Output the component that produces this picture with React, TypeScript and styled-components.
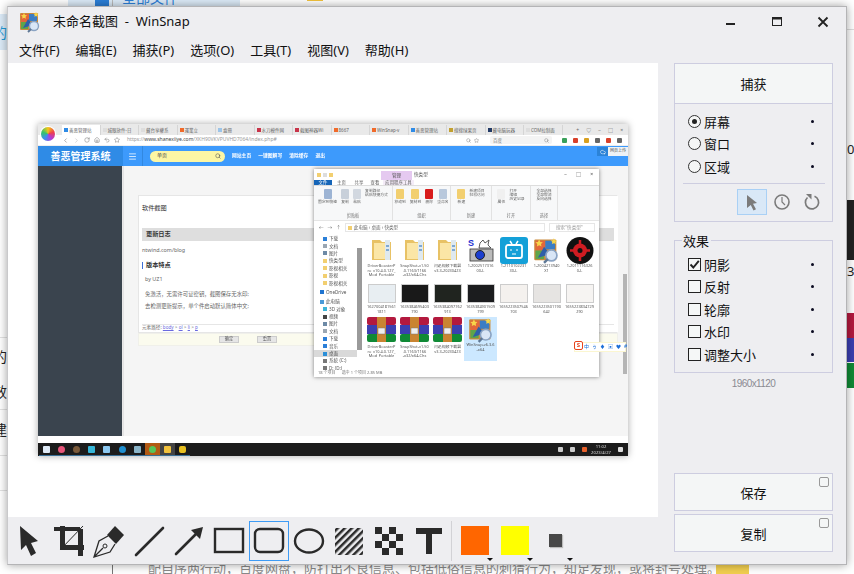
import React from "react";
import styled, { createGlobalStyle } from "styled-components";
import { ChevronLeft, ChevronRight, RotateCw, Home, Undo2, Star, Search, Menu as MenuIcon, Cloud } from "lucide-react";

const Global = createGlobalStyle`
  html, body { margin: 0; padding: 0; background: #fff; overflow: hidden; }
  body { width: 854px; height: 574px; position: relative; font-family: "Noto Sans", "Noto Sans CJK SC", sans-serif; color: #111; }
  * { box-sizing: border-box; }
`;

/* ---------- what shows behind the window ---------- */
const Desktop = styled.div`position: relative; width: 854px; height: 574px; overflow: hidden; background: #fff;`;
const BackBit = styled.div<{ $x: number; $y: number; $w?: number; $h?: number; $bg?: string; $c?: string; $fs?: number }>`
  position: absolute; left: ${p => p.$x}px; top: ${p => p.$y}px;
  ${p => (p.$w ? `width: ${p.$w}px;` : "")} ${p => (p.$h ? `height: ${p.$h}px;` : "")}
  background: ${p => p.$bg || "transparent"}; color: ${p => p.$c || "#222"};
  font-size: ${p => p.$fs || 14}px; line-height: 1; white-space: nowrap; overflow: hidden;
`;

/* ---------- window ---------- */
const Win = styled.div`
  position: absolute; left: 7px; top: 6px; width: 840px; height: 559px;
  background: #eeeef1; border: 1px solid #b4b4b6; border-left-color: #c9c9cb;
  box-shadow: 0 0 9px rgba(0,0,0,.38); display: flex; flex-direction: column;
`;
const TitleBar = styled.div`height: 29px; display: flex; align-items: center; padding-left: 11px; flex: none;`;
const Title = styled.div`margin: -2px 0 0 12px; font-size: 13px; color: #111; white-space: pre;`;
const WinButtons = styled.div`margin-left: auto; display: flex; align-items: center; padding-right: 16px; gap: 32px;`;
const WinBtn = styled.svg`width: 14px; height: 14px; display: block;`;
const MenuBar = styled.div`height: 27px; flex: none; display: flex; align-items: center; padding-left: 11px; gap: 16px; font-size: 13px; color: #111;`;
const MainRow = styled.div`flex: 1; display: flex; min-height: 0;`;
const LeftCol = styled.div`width: 650px; display: flex; flex-direction: column;`;
const Canvas = styled.div`flex: 1; background: #fff; display: flex; align-items: center; justify-content: center; min-height: 0;`;
const Toolbar = styled.div`height: 47px; flex: none; display: flex; align-items: center; padding: 0 0 0 1px;`;
const ToolBtn = styled.div<{ $on?: boolean }>`
  width: 40px; height: 40px; flex: none; border: 1px solid ${p => (p.$on ? "#3d9bf5" : "transparent")};
  display: flex; align-items: center; justify-content: center;
`;
const ToolIcon = styled.svg`width: 40px; height: 40px; flex: none; display: block; margin: -1px;`;
const ToolSep = styled.div`width: 1px; height: 40px; background: #d2d2d6; margin: 0 3px 0 2px; flex: none;`;
const Swatch = styled.div`width: 40px; height: 40px; flex: none; position: relative; display: flex; align-items: center; justify-content: center; padding-right: 0;
  &::after { content: ""; position: absolute; right: 2px; bottom: 0; border: 3px solid transparent; border-top: 3px solid #111; border-bottom: 0; }
`;
const Color = styled.div<{ $c: string; $s: number }>`width: ${p => p.$s}px; height: ${p => p.$s + (p.$s > 20 ? 1 : 0)}px; background: ${p => p.$c}; box-shadow: ${p => (p.$s < 20 ? "1px 1px 1px #bbb" : "none")};`;

/* ---------- side panel ---------- */
const Side = styled.div`flex: 1; padding: 0 13px 12px 16px; display: flex; flex-direction: column;`;
const CaptureBox = styled.div`border: 1px solid #cdcde0; display: flex; flex-direction: column; height: 159px; flex: none;`;
const BigBtn = styled.div`height: 40px; flex: none; background: #f4f6f6; display: flex; align-items: center; justify-content: center; font-size: 13px; position: relative; color: #111;`;
const CaptureHead = styled(BigBtn)`border-bottom: 1px solid #cdcde0;`;
const OptionList = styled.div`padding: 6px 0 0 13px; display: flex; flex-direction: column;`;
const Opt = styled.div`height: 22.5px; display: flex; align-items: center; font-size: 13px; color: #111; padding-right: 18px;`;
const Radio = styled.span<{ $on?: boolean }>`
  width: 13px; height: 13px; border-radius: 50%; border: 1px solid #333; background: #f5f6f6; margin-right: 3px; flex: none;
  display: flex; align-items: center; justify-content: center;
  &::after { content: ""; width: 5px; height: 5px; border-radius: 50%; background: ${p => (p.$on ? "#222" : "transparent")}; }
`;
const Check = styled.span`
  width: 13px; height: 13px; border: 1px solid #222; background: #f5f7f7; margin-right: 3px; flex: none; display: flex; align-items: center; justify-content: center;
`;
const Dot = styled.span`width: 3px; height: 3px; border-radius: 50%; background: #0a0a20; margin-left: auto;`;
const Divider = styled.div`height: 1px; background: #cdcde0; margin: 5px 7px 0 8px;`;
const CaptureModes = styled.div`display: flex; align-items: center; padding: 5px 0 0 62px;`;
const ModeBtn = styled.div<{ $on?: boolean }>`
  width: 30px; height: 26px; display: flex; align-items: center; justify-content: center; flex: none;
  background: ${p => (p.$on ? "#d9e8f7" : "transparent")}; border: 1px solid ${p => (p.$on ? "#a9d0f5" : "transparent")};
`;
const EffectsBox = styled.div`margin-top: 18px; border: 1px solid #cdcde0; height: 133px; flex: none; position: relative; padding: 12px 0 0 13px;`;
const Legend = styled.div`position: absolute; left: 7px; top: -9px; background: #eeeef1; padding: 0 2px 0 1px; font-size: 13px; line-height: 18px;`;
const SizeText = styled.div`text-align: center; font-size: 10px; letter-spacing: -.6px; color: #8a8a92; margin-top: 4px; font-family: "Liberation Sans", sans-serif; line-height: 14px;`;
const BottomBtns = styled.div`margin-top: auto; display: flex; flex-direction: column; gap: 3px;`;
const OutBtn = styled(BigBtn)`border: 1px solid #cdcde0; height: 38px;
  &::after { content: ""; position: absolute; right: 3px; top: 3px; width: 8px; height: 8px; border: 1px solid #999; border-radius: 2px; background: #f4f6f6; }
`;

/* ---------- the captured picture ---------- */
const Shot = styled.div`
  width: 590px; height: 332px; position: relative; background: #f5f5f5; box-shadow: 0 0 7px rgba(0,0,0,.35);
  display: flex; flex-direction: column; overflow: hidden; font-size: 5px; color: #555; filter: blur(.4px); line-height: 1.1;
`;
const TabRow = styled.div`height: 11px; flex: none; background: #e9e9e9; display: flex; padding-left: 24px; align-items: flex-end;`;
const Tab = styled.div<{ $on?: boolean }>`width: 38.5px; height: 10px; flex: none; background: ${p => (p.$on ? "#fff" : "transparent")}; border-right: 1px solid #d5d5d5; font-size: 4.5px; color: #666; display: flex; align-items: center; gap: 1px; padding-left: 2px; white-space: nowrap; overflow: hidden;`;
const TabIco = styled.span<{ $c: string }>`width: 4px; height: 4px; background: ${p => p.$c}; flex: none;`;
const TabRight = styled.div`margin-left: auto; display: flex; gap: 7px; padding: 0 5px 2px 0; font-size: 5px; color: #666;`;
const Logo = styled.div`position: absolute; left: 3px; top: 3px; width: 14px; height: 14px; border-radius: 50%; background: conic-gradient(#f6c616, #ee3f4f, #b23ad8, #3d8ef0, #35c46a, #f6c616); box-shadow: 0 0 0 1px #fff;`;
const AddrRow = styled.div`height: 11px; flex: none; background: #fff; display: flex; align-items: center; padding-left: 24px; gap: 4px; color: #777; border-bottom: 1px solid #eee;`;
const Url = styled.div`margin-left: 3px; width: 270px; font-size: 5px; color: #999; b { color: #444; font-weight: 400; }`;
const AddrRight = styled.div`margin-left: auto; display: flex; align-items: center; gap: 3px; padding-right: 6px;`;
const SearchField = styled.div`width: 62px; height: 8px; background: #f4f4f4; border-radius: 2px; font-size: 4.5px; padding: 0 3px; margin: 0 4px 0 8px; display: flex; align-items: center; justify-content: space-between;`;
const Mini = styled.span<{ $c: string }>`width: 5px; height: 5px; background: ${p => p.$c}; border-radius: 1px; flex: none; margin-left: 3px;`;
const Header = styled.div`height: 20px; flex: none; background: #3d9afc; display: flex; align-items: center; color: #fff;`;
const Brand = styled.div`width: 85px; height: 100%; background: #2f8be6; font-size: 10px; font-weight: 700; display: flex; align-items: center; justify-content: center;`;
const Burger = styled.div`width: 20px; display: flex; justify-content: center; border-right: 1px solid #3288e0; height: 100%; align-items: center; `;
const Pill = styled.div`width: 75px; height: 11px; border-radius: 6px; background: #fdf6a4; margin-left: 7px; color: #444; display: flex; align-items: center; justify-content: space-between; padding: 0 4px 0 7px; font-size: 5px;`;
const HLinks = styled.div`display: flex; gap: 7px; margin-left: 7px; font-size: 4.8px; font-weight: 700;`;
const Body = styled.div`flex: 1; display: flex; min-height: 0;`;
const Rail = styled.div`width: 85px; background: #3a444e; flex: none; border-right: 1px solid #e8e8e8; box-shadow: 1px 0 0 #e4e4e4;`;
const Content = styled.div`flex: 1; padding: 29px 0 0 15px; display: flex; flex-direction: column; min-width: 0;`;
const Card = styled.div`width: 480px; height: 138px; background: #fff; border: 1px solid #e6e6e6; border-right-color: transparent; padding: 7px 3px 0 3px; display: flex; flex-direction: column; flex: none; position: relative;`;
const CardTitle = styled.div`font-size: 6.2px; color: #333; margin-top: 2px;`;
const GrayBar = styled.div`height: 13px; background: #dedede; margin-top: 16px; font-size: 6.2px; color: #333; display: flex; align-items: center; padding-left: 4px; font-weight: 700;`;
const CardLine = styled.div<{ $t: number; $i?: number }>`margin-top: ${p => p.$t}px; padding-left: ${p => p.$i || 0}px; font-size: 5.4px; color: #666; white-space: nowrap;`;
const Feature = styled.div`margin-top: 8px; font-size: 6.2px; font-weight: 700; color: #333; border-left: 1.5px solid #3d6fd8; padding-left: 3px;`;
const PathLine = styled.div`margin-top: auto; border-top: 1px solid #e6e6e6; font-size: 4.6px; height: 8px; color: #666; u { color: #6a6ae0; }`;
const FormStrip = styled.div`width: 480px; height: 13px; background: #fbfbee; border: 1px solid #f0f0ea; display: flex; align-items: center; padding-left: 80px; gap: 18px; flex: none;`;
const FakeBtn = styled.div`width: 20px; height: 7px; background: #e6e6e6; border: 1px solid #ccc; font-size: 4.2px; display: flex; align-items: center; justify-content: center; color: #555;`;
const Strip = styled.div`height: 7px; background: #fff; flex: none;`;
const Taskbar = styled.div`height: 13px; flex: none; background: #1c1c1c; display: flex; align-items: center; padding-left: 1px; color: #ddd;`;
const TaskCell = styled.div<{ $hl?: string }>`width: 15.1px; height: 13px; flex: none; display: flex; align-items: center; justify-content: center; background: ${p => p.$hl || "transparent"}; border-bottom: 1px solid #3a6f96;`;
const TaskIco = styled.span<{ $c: string; $r?: number }>`width: 7px; height: 7px; background: ${p => p.$c}; border-radius: ${p => p.$r || 1}px;`;
const Tray = styled.div`margin-left: auto; display: flex; align-items: center; gap: 4px; padding-right: 5px; font-size: 4.2px; text-align: center; line-height: 5.4px;`;
const UploadTag = styled.div`position: absolute; right: 0; top: 23px; height: 9px; display: flex; background: #2b83d8; color: #fff; align-items: center; padding-left: 3px; font-size: 4px; gap: 2px; span { background: #eef2f6; color: #555; height: 100%; padding: 2px 2px 0; }`;
const ShotScroll = styled.div`position: absolute; right: 1px; top: 150px; width: 4px; height: 100px; background: #b5b5b5;`;
const Ime = styled.div`position: absolute; left: 537px; top: 219px; width: 50px; height: 8px; background: #fff; display: flex; align-items: center; padding-left: 9px; gap: 3px; color: #1c6fd8; font-size: 5px; box-shadow: 0 0 0 1px #fbf6d0;`;
const ImeLogo = styled.div`position: absolute; left: -1px; top: -2px; width: 9px; height: 9px; border: 1px solid #e8431c; border-radius: 2px; background: #fff; color: #e8431c; font-size: 6px; line-height: 7px; text-align: center; font-weight: 700;`;

/* explorer in picture */
const Explorer = styled.div`position: absolute; left: 276px; top: 45px; width: 285px; height: 208px; background: #fff; box-shadow: 0 0 4px rgba(0,0,0,.5); display: flex; flex-direction: column; font-size: 4.6px; color: #555;`;
const ExTitle = styled.div`height: 11px; flex: none; display: flex; align-items: center; padding-left: 3px; gap: 2px;`;
const ExManage = styled.div`margin-left: 46px; width: 31px; height: 9px; background: #e5c9f0; display: flex; align-items: center; justify-content: center; align-self: flex-end;`;
const ExCtl = styled.div`margin-left: auto; display: flex; gap: 9px; padding-right: 6px; font-size: 5px; color: #444;`;
const ExTabs = styled.div`height: 6px; flex: none; display: flex; align-items: stretch; font-size: 4.4px; border-bottom: 1px solid #ddd;`;
const ExTab = styled.div<{ $w: number; $on?: boolean; $bg?: string }>`width: ${p => p.$w}px; background: ${p => p.$bg || "transparent"}; color: ${p => (p.$on ? "#fff" : "#555")}; display: flex; align-items: center; justify-content: center; overflow: hidden; white-space: nowrap;`;
const Ribbon = styled.div`height: 35px; flex: none; background: #f7f8f9; display: flex; border-bottom: 1px solid #e5e5e5;`;
const RGroup = styled.div<{ $w: number }>`width: ${p => p.$w}px; flex: none; border-right: 1px solid #e2e2e2; display: flex; flex-direction: column; align-items: center; padding-top: 3px;`;
const RIcons = styled.div`flex: 1; display: flex; gap: 4px; align-items: flex-start;`;
const RLabel = styled.div`font-size: 4.2px; color: #777; height: 6px;`;
const RCol = styled.div`display: flex; flex-direction: column; align-items: center; gap: 1px; font-size: 3.8px; color: #666; white-space: nowrap;`;
const RIco = styled.span<{ $c: string; $w?: number }>`width: ${p => p.$w || 8}px; height: ${p => (p.$w ? p.$w + 2 : 10)}px; background: ${p => p.$c}; border-radius: 1px; flex: none;`;
const ExAddr = styled.div`height: 13px; flex: none; display: flex; align-items: center; padding: 0 4px 0 5px; gap: 4px; color: #666;`;
const Crumb = styled.div`flex: 1; height: 9px; border: 1px solid #e6e6e6; display: flex; align-items: center; padding-left: 2px; gap: 2px;`;
const ExSearch = styled.div`width: 46px; height: 9px; border: 1px solid #e6e6e6; display: flex; align-items: center; padding-left: 6px; color: #999;`;
const ExBody = styled.div`flex: 1; display: flex; min-height: 0;`;
const Nav = styled.div`width: 48px; flex: none; display: flex; flex-direction: column; padding-top: 1px; position: relative; overflow: hidden;`;
const NavScroll = styled.div`position: absolute; right: 0; top: 14px; width: 5px; height: 102px; background: #9a9a9a;`;
const NavItem = styled.div<{ $i?: number; $sel?: boolean; $gap?: number }>`height: 7.4px; flex: none; display: flex; align-items: center; gap: 2px; padding-left: ${p => p.$i ?? 9}px; margin-top: ${p => p.$gap || 0}px; background: ${p => (p.$sel ? "#d9d9d9" : "transparent")}; white-space: nowrap; margin-right: 5px;`;
const NavIco = styled.span<{ $c: string }>`width: 4px; height: 4px; background: ${p => p.$c}; flex: none;`;
const Files = styled.div`flex: 1; display: grid; grid-template-columns: repeat(7, 33px); grid-template-rows: 46px 34px 44px; padding: 3px 0 0 3px; align-content: start;`;
const FileCell = styled.div<{ $sel?: boolean }>`display: flex; flex-direction: column; align-items: center; background: ${p => (p.$sel ? "#cce8ff" : "transparent")}; text-align: center; font-size: 3.9px; line-height: 4.6px; color: #555; white-space: pre; overflow: hidden;`;
const Thumb = styled.div<{ $bg: string }>`width: 28px; height: 19px; background: ${p => p.$bg}; flex: none; margin-bottom: 2px; margin-top: 1px; border: 1px solid #ccc;`;
const Status = styled.div`height: 7px; flex: none; font-size: 4px; color: #777; padding-left: 4px; display: flex; align-items: center; gap: 6px;`;

/* ---------- drawings ---------- */
const AppIcon = ({ s = 22 }: { s?: number }) => (
  <svg width={s} height={s} viewBox="0 0 22 22" style={{ flex: "none" }}>
    <rect x="1" y="2" width="18" height="17" rx="1" fill="#c98a3c" />
    <rect x="2" y="3" width="8" height="8" fill="#e2673a" />
    <rect x="10" y="3" width="8" height="7" fill="#3b7dc4" />
    <rect x="2" y="11" width="7" height="7" fill="#5ea54a" />
    <path d="M4 17 L9 8 L14 14 Z" fill="#2f5fa8" />
    <path d="M5 2l1 2 2 .3-1.5 1.4.4 2L5 6.8 3.2 7.700l.3-2L2 4.300l2-.3z" fill="#f7d64a" />
    <path d="M17 1l.8 1.600 1.700.2-1.200 1.200.3 1.700L17 5l-1.600.700.3-1.700-1.200-1.200 1.700-.2z" fill="#f7d64a" />
    <circle cx="15" cy="15" r="4.500" fill="#d9e6f6" stroke="#8ba4c4" strokeWidth="1.400" />
    <path d="M12 18l-3 3" stroke="#5f7896" strokeWidth="2" />
  </svg>
);
const FolderIcon = () => (
  <svg width="22" height="26" viewBox="0 0 22 26" style={{ marginBottom: 1 }}>
    <path d="M1 3h8l2 2h9v18H1z" fill="#e8c265" />
    <path d="M3 6h16v16H3z" fill="#fbe6a6" />
    <path d="M14 3h5v20h-5z" fill="#dfe9ef" />
    <path d="M15 8h3v2h-3zM15 12h3v2h-3z" fill="#7fa9d2" />
  </svg>
);
const RarIcon = () => (
  <svg width="29" height="26" viewBox="0 0 29 26" style={{ marginBottom: 2 }}>
    <rect x="0" y="0" width="29" height="8" rx="2" fill="#b3193e" />
    <rect x="0" y="8" width="29" height="9" fill="#3b3fb0" />
    <rect x="0" y="17" width="29" height="8" rx="2" fill="#108a36" />
    <rect x="10" y="0" width="9" height="25" fill="#c98432" />
    <rect x="11" y="11" width="7" height="6" fill="#eee" stroke="#777" strokeWidth=".5" />
  </svg>
);
const SnapCam = () => (
  <svg width="28" height="26" viewBox="0 0 28 26" style={{ marginBottom: 1 }}>
    <rect width="28" height="26" fill="#fff" />
    <text x="1" y="9" fontSize="9" fontWeight="700" fill="#1c2fd0" fontFamily="Liberation Sans">S</text>
    <path d="M13 6l3-3 2 3 4-3-1 5 3 3H12z" fill="#fff" stroke="#333" strokeWidth=".8" />
    <rect x="3" y="12" width="23" height="12" fill="#bbb" stroke="#333" strokeWidth=".8" />
    <circle cx="13" cy="18" r="4.500" fill="#1c3fd0" stroke="#222" />
  </svg>
);
const Bili = () => (
  <svg width="28" height="27" viewBox="0 0 28 27">
    <rect width="28" height="27" rx="3" fill="#14a0d8" />
    <rect x="6" y="8" width="16" height="13" rx="2" fill="none" stroke="#fff" strokeWidth="1.800" />
    <path d="M10 4l2 3M18 4l-2 3" stroke="#fff" strokeWidth="1.500" />
    <path d="M10 13h2M16 13h2M12 17h4" stroke="#fff" strokeWidth="1.200" />
  </svg>
);
const RedGear = () => (
  <svg width="28" height="27" viewBox="0 0 28 27">
    <circle cx="14" cy="13.500" r="13.500" fill="#111" />
    <circle cx="14" cy="13.500" r="7" fill="#d01c22" />
    <circle cx="14" cy="13.500" r="2.500" fill="#111" />
    <path d="M14 3v5M14 19v5M4 13.500h5M19 13.500h5" stroke="#d01c22" strokeWidth="2.500" />
  </svg>
);

const tabs: [string, string][] = [
  ["善恶管理站", "#2f8be6"], ["城眼放件-日", "#ddd"], ["藏台享權系", "#ddd"], ["運業立", "#f06a2a"], ["盒冊", "#9cc4e8"],
  ["水刀模件网", "#c8344a"], ["截图神器Wi", "#c8344a"], ["8667", "#f06a2a"], ["WinSnap-v", "#f06a2a"], ["善恶管理站", "#2f8be6"],
  ["搜搜绿果页", "#c2a030"], ["藏电脑玩器", "#223a66"], ["COM拉制面", "#ddd"],
];
const navItems: { t: string; c: string; i?: number; sel?: boolean; gap?: number }[] = [
  { t: "下载", c: "#2b7fd8" }, { t: "文档", c: "#9aa6b2" }, { t: "图片", c: "#6d8aa6" }, { t: "快类型", c: "#f2cf70" }, { t: "影视相关", c: "#f2cf70" },
  { t: "影视", c: "#f2cf70" }, { t: "影视相关", c: "#f2cf70" },
  { t: "OneDrive", c: "#1f74d0", i: 6, gap: 2 }, { t: "此电脑", c: "#4a9ad8", i: 6, gap: 2 },
  { t: "3D 对象", c: "#3cb4d8" }, { t: "视频", c: "#444" }, { t: "图片", c: "#6d8aa6" }, { t: "文档", c: "#9aa6b2" }, { t: "下载", c: "#2b7fd8" }, { t: "音乐", c: "#2b7fd8" },
  { t: "桌面", c: "#2b8fd8", sel: true }, { t: "系统 (C:)", c: "#777" }, { t: "D: (D:)", c: "#777" },
];
const row1: [React.ReactNode, string][] = [
  [<FolderIcon />, "DriverBoosterP\nro_v10.4.0.127_\nMod_Portable"],
  [<FolderIcon />, "SnapShot-v1.50\n.0.1163/1166\n-x32/x64-Chs"],
  [<FolderIcon />, "闪迅视频下载器\nv3.3-20230423"],
  [<SnapCam />, "1-2002517316\n00-L"],
  [<Bili />, "1-2110102231\n30-L"],
  [<AppIcon s={27} />, "1-2004213940\nX1"],
  [<RedGear />, "1-2011116326\n0-L"],
];
const row2: [string, string][] = [
  ["#e8eef2", "1627004181561\n1811"], ["#191919", "1635384695403\n790"], ["#20241f", "1635384097762\n913"], ["#1b1c1e", "1635384901509\n799"],
  ["#f4f1ee", "1655223507546\n703"], ["#e6e4e2", "1655223501190\n642"], ["#f6f4f2", "1655223834729\n290"],
];
const row3 = ["DriverBoosterP\nro_v10.4.0.127_\nMod_Portable", "SnapShot-v1.50\n.0.1163/1166\n-x32/x64-Chs", "闪迅视频下载器\nv3.3-20230423"];
const taskColors: [string, number, string?][] = [
  ["#dfeaf6", 1], ["#e8557a", 4], ["#7a5a3a", 4], ["#35b6d8", 1], ["#8cc8f0", 1], ["#1f8fd0", 4], ["#8ab4c8", 1], ["#56c45a", 4, "#b25a14"], ["#f2c23c", 1, "#444"], ["#e8c020", 2],
];
const menus = ["文件(F)", "编辑(E)", "捕获(P)", "选项(O)", "工具(T)", "视图(V)", "帮助(H)"];
const ic = "#2a2a2a";

const MiniShot = () => (
  <Shot>
    <Logo />
    <TabRow>
      {tabs.map((t, i) => (
        <Tab key={i} $on={i === 0}><TabIco $c={t[1]} />{t[0]}</Tab>
      ))}
      <TabRight><span>+</span><span>♡</span><span>−</span><span>□</span><span>×</span></TabRight>
    </TabRow>
    <AddrRow>
      <ChevronLeft size={7} /><ChevronRight size={7} color="#bbb" /><RotateCw size={6} /><Home size={6} /><Undo2 size={6} /><Star size={6} />
      <Url>https://<b>www.shanexiiye.com</b>/XKH90VKVPUVHD7064/index.php#</Url>
      <AddrRight>
        <Search size={5} /><Star size={5} />
        <SearchField>百度<Search size={5} /></SearchField>
        <Mini $c="#3aa05a" /><Mini $c="#d8402a" /><Mini $c="#d8a020" /><Mini $c="#666" /><Mini $c="#d8402a" /><Mini $c="#666" />
      </AddrRight>
    </AddrRow>
    <Header>
      <Brand>善恶管理系统</Brand>
      <Burger><MenuIcon size={9} /></Burger>
      <Pill>单页<Search size={6} /></Pill>
      <HLinks><span>网站主页</span><span>一键图解写</span><span>清除缓存</span><span>退出</span></HLinks>
    </Header>
    <Body>
      <Rail />
      <Content>
        <Card>
          <CardTitle>软件截图</CardTitle>
          <GrayBar>更新日志</GrayBar>
          <CardLine $t={7}>ntwind.com/blog</CardLine>
          <Feature>版本特点</Feature>
          <CardLine $t={8} $i={3}>by UZ1</CardLine>
          <CardLine $t={9} $i={3}>免激活，无需许可证密钥，截图保存无水印;</CardLine>
          <CardLine $t={7} $i={3}>去检测更新提示，单个件启动默认简体中文;</CardLine>
          <PathLine>元素路径: <u>body</u> &gt; <u>ol</u> &gt; <u>li</u> &gt; <u>p</u></PathLine>
        </Card>
        <FormStrip><FakeBtn>确定</FakeBtn><FakeBtn>重置</FakeBtn></FormStrip>
      </Content>
    </Body>
    <Strip />
    <Taskbar>
      {taskColors.map((t, i) => (
        <TaskCell key={i} $hl={t[2]}><TaskIco $c={t[0]} $r={t[1]} /></TaskCell>
      ))}
      <Tray>
        <Mini $c="#ccc" /><Mini $c="#ccc" /><Mini $c="#e8602a" />
        <span>11:02<br />2023/4/27</span>
        <Mini $c="#ddd" />
      </Tray>
    </Taskbar>
    <UploadTag><Cloud size={6} /><span>网页上传</span></UploadTag>
    <ShotScroll />
    <Explorer>
      <ExTitle>
        <TabIco $c="#f2cf70" /><TabIco $c="#ddd" /><TabIco $c="#f2cf70" />
        <ExManage>管理</ExManage><span>快类型</span>
        <ExCtl><span>−</span><span>□</span><span>×</span></ExCtl>
      </ExTitle>
      <ExTabs>
        <ExTab $w={18} $on $bg="#1565b8">文件</ExTab><ExTab $w={19}>主页</ExTab><ExTab $w={16}>共享</ExTab><ExTab $w={16}>查看</ExTab>
        <ExTab $w={31} $bg="#f4ecf8">应用程序工具</ExTab>
      </ExTabs>
      <Ribbon>
        <RGroup $w={79}>
          <RIcons>
            <RCol><RIco $c="#9db4d4" />固定到快速</RCol><RCol><RIco $c="#c8d0da" />复制</RCol><RCol><RIco $c="#d2d8e0" />粘贴</RCol>
            <RCol>复制路径<br />粘贴快捷方式</RCol>
          </RIcons><RLabel>剪贴板</RLabel>
        </RGroup>
        <RGroup $w={58}>
          <RIcons>
            <RCol><RIco $c="#f2cf70" />移动到</RCol><RCol><RIco $c="#f2cf70" />复制到</RCol><RCol><RIco $c="#d81c1c" />删除</RCol><RCol><RIco $c="#b8c8dc" />重命名</RCol>
          </RIcons><RLabel>组织</RLabel>
        </RGroup>
        <RGroup $w={41}>
          <RIcons><RCol><RIco $c="#f2cf70" />新建</RCol><RCol>新建项目<br />轻松访问</RCol></RIcons><RLabel>新建</RLabel>
        </RGroup>
        <RGroup $w={39}>
          <RIcons><RCol><RIco $c="#f0f0f0" />属性</RCol><RCol>打开<br />编辑<br />历史记录</RCol></RIcons><RLabel>打开</RLabel>
        </RGroup>
        <RGroup $w={27}>
          <RIcons><RCol>全部选择<br />全部取消<br />反向选择</RCol></RIcons><RLabel>选择</RLabel>
        </RGroup>
      </Ribbon>
      <ExAddr>
        <span>←</span><span>→</span><span>↑</span>
        <Crumb><TabIco $c="#f2cf70" />此电脑 › 桌面 › 快类型</Crumb>
        <ExSearch>搜索"快类型"</ExSearch>
      </ExAddr>
      <ExBody>
        <Nav>
          <NavScroll />
          {navItems.map((n, i) => (
            <NavItem key={i} $i={n.i} $sel={n.sel} $gap={n.gap}><NavIco $c={n.c} />{n.t}</NavItem>
          ))}
        </Nav>
        <Files>
          {row1.map((f, i) => <FileCell key={i}>{f[0]}{f[1]}</FileCell>)}
          {row2.map((f, i) => <FileCell key={i}><Thumb $bg={f[0]} />{f[1]}</FileCell>)}
          {row3.map((t, i) => <FileCell key={i}><RarIcon />{t}</FileCell>)}
          <FileCell $sel><AppIcon s={26} />{"WinSnap-v6.3.6\n-x64"}</FileCell>
        </Files>
      </ExBody>
      <Status><span>18 个项目</span><span>选中 1 个项目 2.85 MB</span></Status>
    </Explorer>
    <Ime>
      <ImeLogo>S</ImeLogo><span>中</span><span>ぅ</span><span>♦</span><span>▣</span><span>♥</span><span>#</span>
    </Ime>
  </Shot>
);

const Opts = ["屏幕", "窗口", "区域"];
const Effects = ["阴影", "反射", "轮廓", "水印", "调整大小"];

export default function App() {
  return (
    <Desktop>
      <Global />
      <BackBit $x={68} $y={0} $w={172} $h={6} $bg="#dcebf8" />
      <BackBit $x={95} $y={-1} $w={14} $h={7} $bg="#2b7fd8" />
      <BackBit $x={122} $y={-9} $fs={14} $c="#2b7fd8">全部文件</BackBit>
      <BackBit $x={307} $y={0} $w={16} $h={1} $bg="#f2c23c" />
      <BackBit $x={0} $y={14} $w={8} $h={36} $bg="#dcebf8" />
      <BackBit $x={-7} $y={26} $fs={14} $c="#1f9ad8">的</BackBit>
      <BackBit $x={0} $y={337} $w={8} $h={1} $bg="#e2e2e2" />
      <BackBit $x={0} $y={409} $w={8} $h={1} $bg="#e2e2e2" />
      <BackBit $x={0} $y={455} $w={8} $h={1} $bg="#e2e2e2" />
      <BackBit $x={0} $y={490} $w={8} $h={1} $bg="#e2e2e2" />
      <BackBit $x={-7} $y={350} $fs={14}>的</BackBit>
      <BackBit $x={-7} $y={385} $fs={14}>效</BackBit>
      <BackBit $x={-7} $y={423} $fs={14}>建</BackBit>
      <BackBit $x={847} $y={143} $fs={13} $c="#222">0</BackBit>
      <BackBit $x={847} $y={265} $fs={13} $c="#222">3</BackBit>
      <BackBit $x={847} $y={200} $w={7} $h={60} $bg="#222" />
      <BackBit $x={847} $y={313} $w={7} $h={25} $bg="#b3193e" />
      <BackBit $x={847} $y={338} $w={7} $h={24} $bg="#3b3fb0" />
      <BackBit $x={847} $y={363} $w={7} $h={25} $bg="#108a36" />
      <BackBit $x={847} $y={29} $w={7} $h={1} $bg="#ddd" />
      <BackBit $x={112} $y={0} $w={1} $h={6} $bg="#bbb" />
      <BackBit $x={112} $y={565} $w={1} $h={9} $bg="#777" />
      <BackBit $x={148} $y={562} $fs={13} $c="#8a8a8a">配自序两行动，百度网盘，防打出不良信息、包括低俗信息的刺猜行为，知足发现，或将封号处理。</BackBit>
      <BackBit $x={716} $y={565} $w={33} $h={9} $bg="#f2cf50" />
      <Win>
        <TitleBar>
          <AppIcon />
          <Title>未命名截图  -  WinSnap</Title>
          <WinButtons>
            <WinBtn viewBox="0 0 14 14"><rect x="2" y="8" width="9" height="2" fill="#222" /></WinBtn>
            <WinBtn viewBox="0 0 14 14"><rect x="2.500" y="2.500" width="9" height="8" fill="none" stroke="#222" /><rect x="2" y="2" width="10" height="2.500" fill="#222" /></WinBtn>
            <WinBtn viewBox="0 0 14 14"><path d="M2.500 2.500l9 9M11.500 2.500l-9 9" stroke="#222" strokeWidth="1.800" /></WinBtn>
          </WinButtons>
        </TitleBar>
        <MenuBar>{menus.map(m => <span key={m}>{m}</span>)}</MenuBar>
        <MainRow>
          <LeftCol>
            <Canvas><MiniShot /></Canvas>
            <Toolbar>
              <ToolBtn><ToolIcon viewBox="0 0 40 40"><path d="M11 5L29 20 22 22 27 32 22 35 17 24 12 29Z" fill={ic} /></ToolIcon></ToolBtn>
              <ToolBtn><ToolIcon viewBox="0 0 40 40"><path d="M5 6h26v4H5zM11 5h5v24h-5zM11 24h24v5H11zM29 8h5v27h-5z" fill={ic} /><path d="M34 5L11 29" stroke={ic} strokeWidth="1" /></ToolIcon></ToolBtn>
              <ToolBtn><ToolIcon viewBox="0 0 40 40"><path d="M26 5l9 9-8 9-9-9z" fill={ic} /><path d="M19 15l-9 5-5 16 16-5 5-8M5 36l9-9" fill="none" stroke={ic} strokeWidth="1.300" /><circle cx="16" cy="25" r="2" fill="none" stroke={ic} /></ToolIcon></ToolBtn>
              <ToolBtn><ToolIcon viewBox="0 0 40 40"><path d="M7 34L34 7" stroke={ic} strokeWidth="2.600" strokeLinecap="round" /></ToolIcon></ToolBtn>
              <ToolBtn><ToolIcon viewBox="0 0 40 40"><path d="M7 33L28 12" stroke={ic} strokeWidth="2.600" strokeLinecap="round" /><path d="M34 6l-12 3 9 9z" fill={ic} /></ToolIcon></ToolBtn>
              <ToolBtn><ToolIcon viewBox="0 0 40 40"><rect x="6" y="8" width="28" height="23" fill="none" stroke={ic} strokeWidth="2.400" /></ToolIcon></ToolBtn>
              <ToolBtn $on><ToolIcon viewBox="0 0 40 40"><rect x="6" y="8" width="28" height="23" rx="5" fill="none" stroke={ic} strokeWidth="2.400" /></ToolIcon></ToolBtn>
              <ToolBtn><ToolIcon viewBox="0 0 40 40"><ellipse cx="20" cy="20" rx="14" ry="11.500" fill="none" stroke={ic} strokeWidth="2.400" /></ToolIcon></ToolBtn>
              <ToolBtn>
                <ToolIcon viewBox="0 0 40 40">
                  <defs>
                    <pattern id="hatch" width="5" height="5" patternUnits="userSpaceOnUse" patternTransform="rotate(45)">
                      <rect width="2.500" height="5" fill={ic} />
                    </pattern>
                  </defs>
                  <rect x="6" y="7" width="28" height="27" fill="url(#hatch)" />
                </ToolIcon>
              </ToolBtn>
              <ToolBtn><ToolIcon viewBox="0 0 40 40"><path d="M6 6h7v7H6zM20 6h7v7h-7zM13 13h7v7h-7zM27 13h7v7h-7zM6 20h7v7H6zM20 20h7v7h-7zM13 27h7v7h-7zM27 27h7v7h-7z" fill={ic} /></ToolIcon></ToolBtn>
              <ToolBtn><ToolIcon viewBox="0 0 40 40"><path d="M7 7h26v6H23v20h-6V13H7z" fill={ic} /></ToolIcon></ToolBtn>
              <ToolSep />
              <Swatch><Color $c="#ff6600" $s={28} /></Swatch>
              <Swatch><Color $c="#ffff00" $s={28} /></Swatch>
              <Swatch><Color $c="#484848" $s={13} /></Swatch>
            </Toolbar>
          </LeftCol>
          <Side>
            <CaptureBox>
              <CaptureHead>捕获</CaptureHead>
              <OptionList>
                {Opts.map((o, i) => <Opt key={o}><Radio $on={i === 0} />{o}<Dot /></Opt>)}
              </OptionList>
              <Divider />
              <CaptureModes>
                <ModeBtn $on>
                  <svg width="14" height="18" viewBox="0 0 14 18"><path d="M2 2l10 8-4 .8 3 5.500-2.500 1.200-2.700-5.500L2 15z" fill="#7b7b7b" /></svg>
                </ModeBtn>
                <ModeBtn>
                  <svg width="18" height="18" viewBox="0 0 18 18"><circle cx="9" cy="9" r="7" fill="none" stroke="#7b7b7b" strokeWidth="1.600" /><path d="M9 4v5l3 3" fill="none" stroke="#7b7b7b" strokeWidth="1.200" /></svg>
                </ModeBtn>
                <ModeBtn>
                  <svg width="18" height="18" viewBox="0 0 18 18"><path d="M11.500 3.200A6.600 6.600 0 1 1 4.500 4.500" fill="none" stroke="#7b7b7b" strokeWidth="1.700" /><path d="M3 1h5.500v5.500z" fill="#7b7b7b" /></svg>
                </ModeBtn>
              </CaptureModes>
            </CaptureBox>
            <EffectsBox>
              <Legend>效果</Legend>
              {Effects.map((e, i) => (
                <Opt key={e}>
                  <Check>
                    {i === 0 && <svg width="11" height="11" viewBox="0 0 11 11"><path d="M1.500 5.500l2.800 3L9.800 1.800" fill="none" stroke="#222" strokeWidth="1.900" /></svg>}
                  </Check>
                  {e}<Dot />
                </Opt>
              ))}
            </EffectsBox>
            <SizeText>1960x1120</SizeText>
            <BottomBtns>
              <OutBtn>保存</OutBtn>
              <OutBtn>复制</OutBtn>
            </BottomBtns>
          </Side>
        </MainRow>
      </Win>
    </Desktop>
  );
}
